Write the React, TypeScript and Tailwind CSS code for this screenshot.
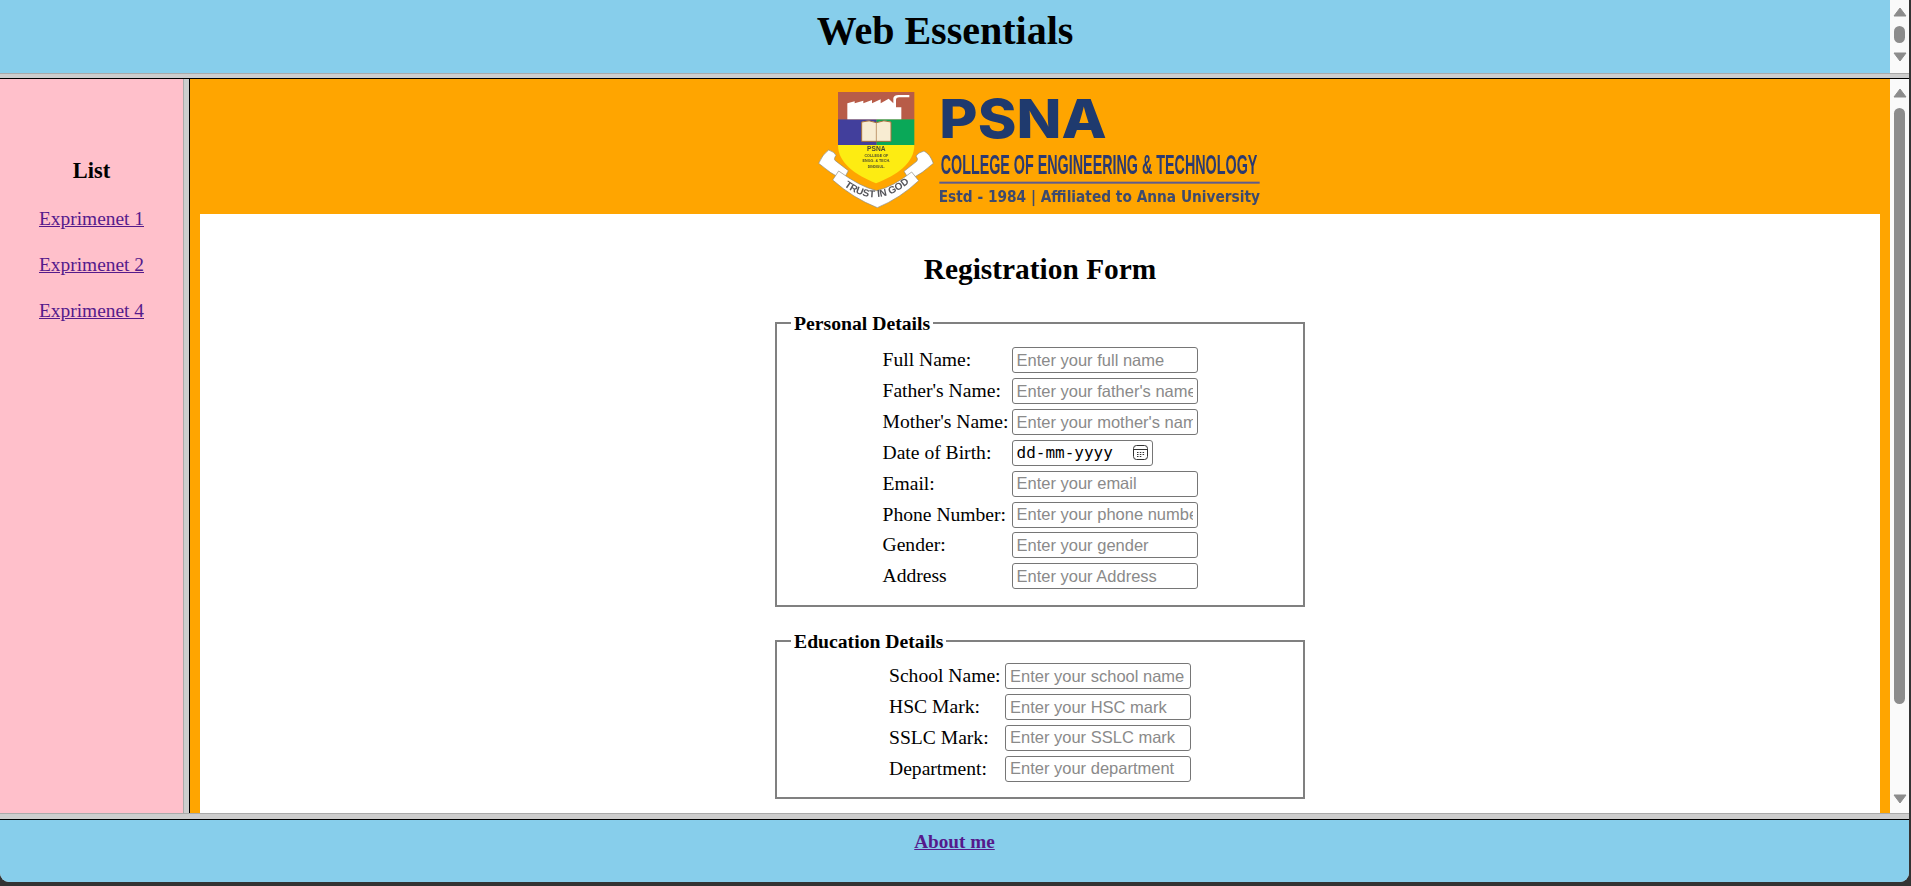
const personal = [
  ["Full Name:", "Enter your full name"],
  ["Father's Name:", "Enter your father's name"],
  ["Mother's Name:", "Enter your mother's name"],
  ["Date of Birth:", ""],
  ["Email:", "Enter your email"],
  ["Phone Number:", "Enter your phone number"],
  ["Gender:", "Enter your gender"],
  ["Address", "Enter your Address"],
];

const education = [
  ["School Name:", "Enter your school name"],
  ["HSC Mark:", "Enter your HSC mark"],
  ["SSLC Mark:", "Enter your SSLC mark"],
  ["Department:", "Enter your department"],
];

function Arrow({ down }: { down?: boolean }) {
  return (
    <svg width="14" height="10" viewBox="0 0 14 10" className="shrink-0">
      <path d={down ? "M1 1H13L7 9Z" : "M7 1L13 9H1Z"} fill="#8c8c8c" stroke="#8c8c8c" strokeLinejoin="round" />
    </svg>
  );
}

function Logo() {
  return (
    <svg width="520" height="135" viewBox="0 27 1560 405" className="blur-[0.4px]">
      {/* crest */}
      <rect x="174" y="66" width="229" height="83" fill="#b85c48" />
      <rect x="174" y="148" width="116" height="78" fill="#423f9c" />
      <rect x="290" y="148" width="113" height="78" fill="#0aa858" />
      <path d="M174 225H403C403 280 350 315 288 340C228 315 174 280 174 225Z" fill="#fdec12" />
      <path d="M202 148V100L224 94V100L250 92V100L276 90V100L302 88V100L326 86L340 100V84Q342 75 356 75H388V82H358Q348 82 348 90V112H364V148Z" fill="#fff" />
      <path d="M245 156Q268 148 289 158Q312 148 333 156V214H245Z" fill="#f8ecd2" stroke="#a5703c" strokeWidth="3" />
      <line x1="289" y1="158" x2="289" y2="214" stroke="#a5703c" strokeWidth="2" />
      <text x="289" y="243" textAnchor="middle" fontFamily="Liberation Sans, sans-serif" fontSize="20" fontWeight="700" fill="#4a4a30">PSNA</text>
      <text x="289" y="261" textAnchor="middle" fontFamily="Liberation Sans, sans-serif" fontSize="11" fontWeight="700" fill="#4a4a30">COLLEGE OF</text>
      <text x="289" y="277" textAnchor="middle" fontFamily="Liberation Sans, sans-serif" fontSize="11" fontWeight="700" fill="#4a4a30">ENGG. &amp; TECH.</text>
      <text x="289" y="293" textAnchor="middle" fontFamily="Liberation Sans, sans-serif" fontSize="10" fontWeight="700" fill="#4a4a30">DINDIGUL.</text>
      {/* ribbon */}
      <g fill="#fff" stroke="#8a8a80" strokeWidth="2" strokeLinejoin="round">
        <path d="M116 280Q128 252 146 240Q164 246 168 256Q160 268 166 272L205 302L190 330Q150 310 116 280Z" />
        <path d="M460 280Q450 252 432 243Q414 248 408 258Q416 268 410 274L372 304L388 330Q428 310 460 280Z" />
        <path d="M158 330L176 303Q240 350 290 362Q340 350 395 306L416 332Q360 385 292 413Q220 385 158 330Z" />
      </g>
      <path id="ribbonCurve" d="M178 336Q288 432 402 326" fill="none" />
      <text fontFamily="Liberation Sans, sans-serif" fontSize="30" fontWeight="700" fill="#55555a">
        <textPath href="#ribbonCurve" startOffset="50%" textAnchor="middle">TRUST IN GOD</textPath>
      </text>
      {/* wordmark */}
      <text x="478" y="204" fontFamily="Inter, sans-serif" fontSize="162" fontWeight="800" fill="#1f3a6e" textLength="502" lengthAdjust="spacingAndGlyphs">PSNA</text>
      <text x="482" y="312" fontFamily="Liberation Sans, sans-serif" fontSize="82" fontWeight="700" fill="#2b3a70" textLength="950" lengthAdjust="spacingAndGlyphs">COLLEGE OF ENGINEERING &amp; TECHNOLOGY</text>
      <rect x="478" y="335" width="961" height="6" fill="#5d5c8c" />
      <text x="476" y="395" fontFamily="DejaVu Sans, sans-serif" fontSize="46" fontWeight="700" fill="#3d4a6e" textLength="964" lengthAdjust="spacingAndGlyphs">Estd - 1984 | Affiliated to Anna University</text>
    </svg>
  );
}

function DateField() {
  return (
    <div className="flex h-[26px] w-[141px] items-center justify-between rounded-[3px] border border-[#767676] bg-white px-[4px] font-['DejaVu_Sans_Mono',monospace] text-[16px] text-black">
      <span>dd-mm-yyyy</span>
      <svg width="15" height="15" viewBox="0 0 15 15" fill="none" stroke="#333" strokeWidth="1">
        <rect x="0.5" y="0.5" width="14" height="14" rx="3" />
        <line x1="1" y1="4.5" x2="14" y2="4.5" />
        <path d="M4 7.5h1.5M6.8 7.5h1.5M9.6 7.5h1.5M4 9.5h1.5M6.8 9.5h1.5M9.6 9.5h1.5M4 11.5h1.5M6.8 11.5h1.5" />
      </svg>
    </div>
  );
}

function Rows({ rows, labelWidth }: { rows: string[][]; labelWidth: string }) {
  return (
    <div className="flex flex-col">
      {rows.map(([label, hint]) => (
        <div key={label} className="flex h-[30.85px] items-center">
          <label className={`${labelWidth} shrink-0 whitespace-nowrap text-[19.6px] leading-[22px]`}>{label}</label>
          {hint ? (
            <input
              placeholder={hint}
              className="h-[26px] w-[186px] rounded-[3px] border border-[#767676] bg-white px-[4px] font-['Liberation_Sans',sans-serif] text-[16.5px] placeholder:text-[#8a8a8a] focus:outline-none"
            />
          ) : (
            <DateField />
          )}
        </div>
      ))}
    </div>
  );
}

export default function App() {
  return (
    <div className="h-[886px] w-full overflow-hidden bg-[#333] pb-[4px] pr-[2px] font-['Liberation_Serif',serif] text-black">
      <div className="flex h-full flex-col overflow-hidden rounded-b-[9px] bg-[#cdcdcd]">
        <div className="flex h-[73px] shrink-0">
          <div className="flex flex-1 justify-center bg-[#87ceeb] pt-[8px]">
            <h1 className="text-[40px] font-bold leading-[46px]">Web Essentials</h1>
          </div>
          <div className="flex w-[19px] flex-col items-center bg-[#fafafa] pt-[7px]">
            <Arrow />
            <div className="mt-[9px] h-[17px] w-[11px] rounded-full bg-[#8c8c8c]" />
            <div className="mt-[9px]"><Arrow down /></div>
          </div>
        </div>
        <div className="h-[6px] shrink-0 border-b border-t border-b-black border-t-[#aaa]" />

        <div className="flex min-h-0 flex-1">
          <div className="flex w-[183px] flex-col items-center bg-[#ffc0cb] pt-[79px]">
            <h3 className="text-[22.4px] font-bold leading-[26px]">List</h3>
            <a href="#" className="mt-[24px] text-[19.4px] leading-[22px] text-[#551a8b] underline">Exprimenet 1</a>
            <a href="#" className="mt-[24px] text-[19.4px] leading-[22px] text-[#551a8b] underline">Exprimenet 2</a>
            <a href="#" className="mt-[24px] text-[19.4px] leading-[22px] text-[#551a8b] underline">Exprimenet 4</a>
          </div>
          <div className="w-[7px] border-l border-r border-l-[#aaa] border-r-black" />

          <div className="flex min-w-0 flex-1 flex-col overflow-hidden bg-[#ffa500] px-[10px]">
            <div className="flex h-[135px] shrink-0 justify-center">
              <Logo />
            </div>
            <div className="flex flex-1 flex-col items-center bg-white pt-[39px]">
              <h2 className="text-[29.4px] font-bold leading-[33px]">Registration Form</h2>
              <fieldset className="mt-[26px] w-[530px] shrink-0 border-2 border-[#808080] px-[14px] pb-[13px] pt-[11px]">
                <legend className="px-[3px] text-[19.7px] font-bold leading-[22px]">Personal Details</legend>
                <div className="flex justify-center">
                  <Rows rows={personal} labelWidth="w-[129px]" />
                </div>
              </fieldset>
              <fieldset className="mt-[23px] w-[530px] shrink-0 border-2 border-[#808080] px-[14px] pb-[13px] pt-[9px]">
                <legend className="px-[3px] text-[19.7px] font-bold leading-[22px]">Education Details</legend>
                <div className="flex justify-center">
                  <Rows rows={education} labelWidth="w-[116px]" />
                </div>
              </fieldset>
            </div>
          </div>

          <div className="flex w-[19px] flex-col items-center bg-[#fafafa] pt-[9px]">
            <Arrow />
            <div className="mt-[10px] h-[596px] w-[11px] rounded-full bg-[#8c8c8c]" />
            <div className="mt-[90px]"><Arrow down /></div>
          </div>
        </div>

        <div className="h-[7px] shrink-0 border-b border-t border-b-black border-t-[#aaa]" />
        <div className="h-[62px] shrink-0 bg-[#87ceeb] pt-[11px] text-center">
          <a href="#" className="text-[19.2px] font-bold leading-[22px] text-[#551a8b] underline">About me</a>
        </div>
      </div>
    </div>
  );
}
